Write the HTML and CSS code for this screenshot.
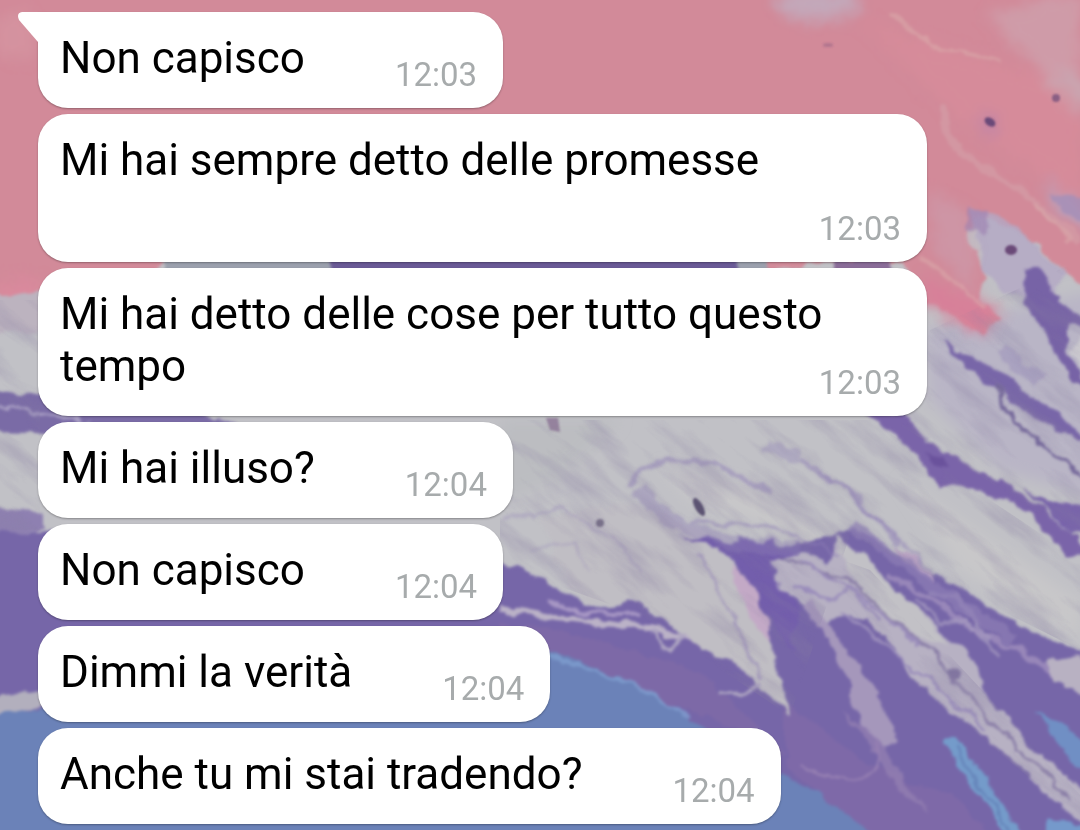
FILE: index.html
```html
<!DOCTYPE html>
<html lang="it">
<head>
    <meta charset="UTF-8">
    <meta name="viewport" content="width=device-width, initial-scale=1.0">
    <title>Chat</title>
    <link rel="stylesheet" href="styles.css">
</head>
<body>

<!-- Marbled wallpaper -->
<svg class="wallpaper" viewBox="0 0 1080 830" preserveAspectRatio="xMidYMid slice" aria-hidden="true">
    <defs>
        <filter id="rough" x="-5%" y="-5%" width="110%" height="110%" color-interpolation-filters="sRGB">
            <feTurbulence type="fractalNoise" baseFrequency="0.05" numOctaves="4" seed="7" result="noise"/>
            <feDisplacementMap in="SourceGraphic" in2="noise" scale="13" xChannelSelector="R" yChannelSelector="G"/>
            <feGaussianBlur stdDeviation="1.6"/>
        </filter>
        <filter id="soft" x="-20%" y="-20%" width="140%" height="140%">
            <feGaussianBlur stdDeviation="7"/>
        </filter>
        <filter id="speck" x="-5%" y="-5%" width="110%" height="110%">
            <feGaussianBlur stdDeviation="1.2"/>
        </filter>
        <filter id="veins" x="0" y="0" width="100%" height="100%" color-interpolation-filters="sRGB">
            <feTurbulence type="fractalNoise" baseFrequency="0.012 0.05" numOctaves="4" seed="3"/>
            <feColorMatrix values="0 0 0 0 0.54  0 0 0 0 0.50  0 0 0 0 0.64  2.6 0 0 0 -1.15"/>
        </filter>
        <clipPath id="greyArea">
            <path d="M500 420H870L1080 560V650L850 535L790 716L640 615L500 565Z M930 330L1080 260V540L900 425Z M0 300H40V530H0Z M800 545L870 570L1080 795V820L900 670Z"/>
        </clipPath>
    </defs>

    <rect width="1080" height="830" fill="#c1c1c6"/>
    <g filter="url(#soft)">
        <path fill="#b9b5c6" d="M925 330L1100 290V500L1000 470L930 400Z"/>
        <path fill="#c8c7c9" d="M660 465L760 490L860 560L780 530L690 500ZM900 480L1080 600V640L960 570Z"/>
        <path fill="#bcbdc1" d="M500 420H620L560 480L500 500Z"/>
    </g>

    <g filter="url(#rough)">
        <!-- pink top -->
        <path fill="#d28a99" d="M-20-20H1100V295L1065 275L1040 245L1010 228L975 215L968 240L985 270L978 300L1002 318L985 335L925 300L900 262H830L765 270L740 262H165L120 290L0 302L-20 302Z"/>
        <g filter="url(#soft)">
            <ellipse cx="818" cy="4" rx="42" ry="17" fill="#c3a7b9"/>
            <path fill="#d68b9a" d="M860 20L1080 90V200L960 120Z"/>
            <path fill="#cf9ba8" d="M985 15L1080-10V120L1030 60Z"/>
            <path fill="#c9a0b2" d="M925 190L975 215L975 300L935 250Z" opacity=".5"/>
            <path fill="#c9a5b0" d="M1050 70L1095 85V110L1060 90Z"/>
            <path fill="#b8a2bd" d="M1045 180L1090 215V235L1055 210Z"/>
            <path fill="#d78099" d="M925 275L1000 310L985 335L925 305Z"/>
            <ellipse cx="15" cy="35" rx="22" ry="25" fill="#d4929f"/>
            <path fill="#da899d" d="M0 282L40 278V300L0 303Z"/>
            <path fill="#bd85a8" d="M975 118L995 112L1000 134L985 138Z" opacity=".7"/>
        </g>
        <path fill="none" stroke="#d3a0a8" stroke-width="7" opacity=".6" d="M940 108Q950 140 972 162L1020 190L1060 225L1080 243"/>
        <path fill="none" stroke="#dcb0ae" stroke-width="4" opacity=".5" d="M920 258Q960 285 985 310M1035 205L1070 240M890 10L930 45L1000 60"/>
        <path fill="#b3a8c4" d="M970 205L1000 215L1032 240L1065 275L1050 300L1005 295L985 275Z" opacity=".8"/>
        <path fill="#9d80b0" d="M968 205L990 210L985 235L968 230Z" opacity=".6"/>
        <path fill="#a48fb8" d="M1050 190L1085 200V225L1058 206Z" opacity=".8"/>

        <!-- strip seen between the second and third bubble -->
        <path fill="#9ba0ad" d="M165 255H340V278H165ZM735 255H768V278H735Z"/>
        <path fill="#6a5a96" d="M330 252H738V280H330Z"/>
        <path fill="#8a6c98" d="M835 258H890V274H835Z"/>

        <!-- purple strands, upper right -->
        <path fill="#7763a6" d="M1024 272Q1038 262 1050 282L1062 305L1090 318V330L1070 326L1066 350L1090 395L1070 378L1045 335L1025 302Z"/>
        <path fill="#7866a8" d="M942 340L982 363L1008 372L1020 392L1058 412L1092 445L1066 436L1022 410L1000 392L968 370Z"/>
        <path fill="none" stroke="#75689a" stroke-width="4" d="M997 385Q1002 415 1025 430L1060 458L1092 480"/>
        <path fill="#7a64a9" d="M850 405L905 415L925 440L965 462L1010 485L1045 510L1090 550L1070 558L1040 525L1005 500L960 485L940 488L920 460L892 432Z"/>
        <path fill="#6a529c" d="M925 452L945 458L950 470L932 468Z"/>
        <path fill="#7863ab" d="M1025 488L1050 503L1090 508V530L1070 532Z"/>
        <path fill="#cac8ce" d="M1068 350L1090 330V380Z"/>

        <!-- purple left edge -->
        <path fill="#bcb3bf" d="M-20 296L45 290V330L-20 335Z"/>
        <path fill="#7a6ba6" d="M-20 388L60 398L200 415L245 425L40 433L-20 432Z"/>
        <path fill="none" stroke="#aaa0c5" stroke-width="3" d="M-10 406L35 412L90 422"/>
        <path fill="#8e80b1" d="M-20 500L15 508L45 515V530L-20 540Z"/>

        <!-- lower purple body -->
        <path fill="#7666a8" d="M-20 535L40 532L300 545L500 562L540 578L595 608L640 602L668 620L735 640L735 538L790 545L855 528L900 555L960 588L1010 618L1100 665V850H-20Z"/>
        <path fill="#7d69a7" d="M500 622L600 640L700 670L790 760L740 730L610 680L500 655Z"/>
        <path fill="#7e69a8" d="M780 700L860 760L960 800L1000 850H880L790 770Z"/>
        <path fill="none" stroke="#bbb2c7" stroke-width="7" d="M500 608L545 616L610 624L660 630L710 645"/>
        <path fill="none" stroke="#a797c4" stroke-width="4" d="M550 602L580 612L640 616"/>

        <!-- grey tongue -->
        <path fill="#c0bec4" d="M540 520L560 572L592 606L640 602L668 620L700 648L735 665L768 695L790 716L780 670L765 635L742 600L730 560L700 530L620 500Z"/>
        <path fill="#735eac" d="M678 535L712 540L770 542L800 555L770 570L800 610L790 650L770 615L745 575L720 550Z"/>
        <path fill="#c3a9c6" d="M728 562L748 580L770 620L766 640L745 610Z"/>
        <path fill="none" stroke="#ada4c1" stroke-width="4" d="M650 630L668 650L685 635M722 690L740 695L762 684"/>

        <!-- long lilac streaks -->
        <path fill="#b7b1c3" d="M770 562L800 552L830 562L838 535L868 560L905 600L945 635L972 662L995 705L1030 745L1095 800V835L1050 795L1000 748L955 715L920 685L900 655L872 625L845 612L825 628L805 605L782 590Z"/>
        <path fill="#c2c1c6" d="M835 535L865 555L905 600L950 645L925 640L885 612L850 575Z"/>
        <path fill="none" stroke="#76689b" stroke-width="3" opacity=".7" d="M780 558L850 580L895 620L935 655L975 705L1020 750L1070 800"/>
        <path fill="none" stroke="#9a8dbb" stroke-width="3" d="M840 610L885 645L930 680L985 730M800 560L860 595L920 645M795 585L830 600L850 590L880 620"/>
        <circle cx="955" cy="673" r="6" fill="#8074a0"/>
        <path fill="#a597bb" d="M812 600L835 635L860 665L882 705L898 742L885 748L862 725L848 680L825 640L803 605Z"/>
        <path fill="#9681b2" d="M842 710L880 740L905 780L930 815L890 780L875 750Z" opacity=".7"/>
        <path fill="none" stroke="#957fb2" stroke-width="3" d="M802 765Q830 780 868 779Q885 770 875 740"/>
        <path fill="none" stroke="#a696c1" stroke-width="6" opacity=".7" d="M890 575L935 600L975 630L1020 650L1080 690"/>
        <path fill="#b8b1c2" d="M1045 662L1090 655V700L1060 685Z"/>
        <path fill="#b9a3c3" d="M895 545L920 560L935 580L905 565Z"/>
        <path fill="none" stroke="#a79bc0" stroke-width="4" opacity=".7" d="M915 600L940 625L965 620L1000 655M930 590L960 600L990 640"/>

        <!-- blue -->
        <path fill="#b2afbd" d="M-20 700L40 690L60 700L-20 722Z"/>
        <path fill="#6b82b8" d="M-20 718L35 708L300 690L545 650L585 662L625 680L665 702L710 735L785 778L835 802L885 850H-20Z"/>
        <path fill="none" stroke="#7f9fd0" stroke-width="4" opacity=".8" d="M550 656L590 668L640 688L690 718"/>
        <path fill="none" stroke="#749bca" stroke-width="14" stroke-linecap="round" d="M950 742L985 790L1015 840"/>
        <path fill="none" stroke="#6685ba" stroke-width="3" d="M955 748L990 800L1012 840"/>
        <path fill="#708fc4" d="M1035 708L1062 725L1095 750V780L1065 752Z"/>
        <path fill="#7599cb" d="M1050 818L1095 830V850H1040Z"/>
    </g>

    <!-- pale lilac veins in the grey area -->
    <g filter="url(#rough)" fill="none" stroke="#8d7db5">
        <path stroke-width="14" opacity=".4" d="M640 490Q655 515 690 528L740 545L800 548"/>
        <path stroke-width="5" opacity=".5" d="M632 488Q630 470 655 462L710 462L770 490M800 460L860 500L900 545"/>
        <path stroke-width="3" opacity=".5" d="M690 520L780 530L840 555M820 470L880 520L930 570M700 555L735 620L760 680"/>
        <path stroke-width="3" opacity=".3" d="M505 520L560 508L610 535L640 570M530 550L575 545L590 570"/>
        <path stroke-width="12" opacity=".7" d="M850 525L905 565L960 605L1015 640"/>
        <path stroke-width="12" opacity=".35" d="M765 445L800 458M1000 350L1040 380"/>
    </g>

    <g clip-path="url(#greyArea)">
        <rect x="-200" y="-400" width="1700" height="1700" filter="url(#veins)" transform="rotate(38 540 415)" opacity=".3"/>
    </g>

    <!-- dark specks -->
    <g fill="#6b4878" filter="url(#speck)">
        <ellipse cx="990" cy="122" rx="6" ry="4" transform="rotate(35 990 122)"/>
        <ellipse cx="1011" cy="250" rx="6" ry="5"/>
        <circle cx="1056" cy="98" r="4" opacity=".7"/>
        <ellipse cx="699" cy="507" rx="4" ry="10" fill="#5c5272" transform="rotate(-30 699 507)"/>
        <circle cx="600" cy="523" r="4" fill="#5c5272" opacity=".7"/>
        <ellipse cx="828" cy="45" rx="5" ry="2" opacity=".3"/>
        <path d="M546 418L558 418L560 432L550 430Z" opacity=".5"/>
    </g>
</svg>

<main class="chat">
    <div class="bubble first">
        <svg class="tail" viewBox="0 0 21 30" aria-hidden="true">
            <path d="M21 0H4Q-2 1 1 8L20 30H21Z" fill="#fff"/>
        </svg>
        Non capisco<time class="time">12:03</time>
    </div>
    <div class="bubble">Mi hai sempre detto delle promesse<time class="time">12:03</time></div>
    <div class="bubble">Mi hai detto delle cose per tutto questo tempo<time class="time">12:03</time></div>
    <div class="bubble">Mi hai illuso?<time class="time">12:04</time></div>
    <div class="bubble">Non capisco<time class="time">12:04</time></div>
    <div class="bubble">Dimmi la verità<time class="time">12:04</time></div>
    <div class="bubble">Anche tu mi stai tradendo?<time class="time">12:04</time></div>
</main>

</body>
</html>
```
FILE: styles.css
```css
* {
    margin: 0;
    padding: 0;
    box-sizing: border-box;
}

body {
    font-family: Roboto, "Liberation Sans", sans-serif;
    background-color: #c0c0c6;
    color: #000;
}

.wallpaper {
    position: fixed;
    inset: 0;
    width: 100%;
    height: 100%;
    z-index: -1;
}

/* Message list */
.chat {
    display: flex;
    flex-direction: column;
    align-items: flex-start;
    gap: 6px;
    padding: 12px 153px 6px 38px;
}

.bubble {
    display: flow-root;
    position: relative;
    padding: 20px 26px 14px 22px;
    background-color: #fff;
    border-radius: 30px;
    box-shadow: 0 1px 2px rgba(0, 0, 0, 0.3);
    font-size: 44px;
    line-height: 52px;
}

.bubble.first {
    border-top-left-radius: 0;
}

.tail {
    position: absolute;
    top: 0;
    left: -20px;
    width: 21px;
    height: 30px;
}

/* Sits beside the last line, or drops under it when there is no room */
.time {
    float: right;
    margin-top: 24px;
    margin-left: 90px;
    font-size: 33px;
    line-height: 38px;
    color: #a7abac;
}
```
